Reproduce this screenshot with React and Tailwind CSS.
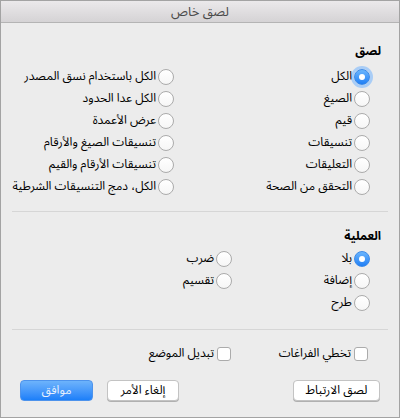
import React from 'react';

const Radio = ({ checked, focused }) => {
    if (checked) {
        return (
            <span
                className={`flex items-center justify-center w-[16px] h-[16px] rounded-full bg-gradient-to-b from-[#6ab5fd] to-[#1d7ff5] border border-[#3d8ae8] shrink-0 ${focused ? 'ring-[3px] ring-[#a9cdf6]' : ''}`}
            >
                <span className="w-[6px] h-[6px] rounded-full bg-white" />
            </span>
        );
    }
    return (
        <span className="w-[16px] h-[16px] rounded-full bg-gradient-to-b from-white to-[#f6f6f6] border border-[#ababab] shrink-0" />
    );
};

const RadioRow = ({ label, checked, focused }) => (
    <div className="flex items-center h-[22px] gap-[2px]">
        <Radio checked={checked} focused={focused} />
        <span className="whitespace-nowrap leading-[16px]">{label}</span>
    </div>
);

const CheckRow = ({ label }) => (
    <div className="flex items-center gap-[3px] h-[16px]">
        <span className="w-[14px] h-[14px] rounded-[3px] bg-white border border-[#ababab] shrink-0" />
        <span className="whitespace-nowrap">{label}</span>
    </div>
);

const Button = ({ children, primary, className }) => (
    <div
        className={`h-[21px] flex items-center justify-center rounded-[4px] ${
            primary
                ? 'bg-gradient-to-b from-[#6db3fb] to-[#1b7ff9] text-[#e6f0fd] border border-[#4d93ec]'
                : 'bg-white border border-[#c3c3c3] shadow-[0_1px_0_#b0b0b0]'
        } ${className}`}
    >
        {children}
    </div>
);

const pasteRight = ['الكل', 'الصيغ', 'قيم', 'تنسيقات', 'التعليقات', 'التحقق من الصحة'];
const pasteLeft = [
    'الكل باستخدام نسق المصدر',
    'الكل عدا الحدود',
    'عرض الأعمدة',
    'تنسيقات الصيغ والأرقام',
    'تنسيقات الأرقام والقيم',
    'الكل، دمج التنسيقات الشرطية',
];

export default function App() {
    return (
        <div
            dir="rtl"
            className="w-[400px] h-[418px] bg-[#ececec] border border-[#a3a3a3] flex flex-col text-[12px] text-black overflow-hidden"
            style={{ fontFamily: '"Noto Sans Arabic", "DejaVu Sans", sans-serif' }}
        >
            {/* شريط العنوان */}
            <div className="h-[22px] shrink-0 flex items-center justify-center bg-gradient-to-b from-[#ebe9eb] to-[#d5d3d5] border-b border-[#b4b4b4] text-[#4a4a4a] text-[13px] leading-[16px]">
                لصق خاص
            </div>

            {/* لصق */}
            <div className="pr-[18px] mt-[21px] leading-[16px] font-bold">لصق</div>
            <div className="grid grid-cols-[196px_1fr] pr-[29px] mt-[6px]">
                <div>
                    {pasteRight.map((l, i) => (
                        <RadioRow key={l} label={l} checked={i === 0} focused={i === 0} />
                    ))}
                </div>
                <div>
                    {pasteLeft.map((l) => (
                        <RadioRow key={l} label={l} />
                    ))}
                </div>
            </div>

            <div className="mx-[11px] mt-[13px] h-px bg-[#d6d6d6]" />

            {/* العملية */}
            <div className="pr-[18px] mt-[17px] leading-[16px] font-bold">العملية</div>
            <div className="grid grid-cols-[138px_1fr] pr-[29px] mt-[3px]">
                <div>
                    <RadioRow label="بلا" checked />
                    <RadioRow label="إضافة" />
                    <RadioRow label="طرح" />
                </div>
                <div>
                    <RadioRow label="ضرب" />
                    <RadioRow label="تقسيم" />
                </div>
            </div>

            <div className="mx-[11px] mt-[15px] h-px bg-[#d6d6d6]" />

            <div className="grid grid-cols-[137px_1fr] pr-[31px] mt-[16px] leading-[16px]">
                <CheckRow label="تخطي الفراغات" />
                <CheckRow label="تبديل الموضع" />
            </div>

            <div className="flex justify-between pr-[19px] pl-[19px] mt-[18px] leading-[16px]">
                <Button className="w-[87px]">لصق الارتباط</Button>
                <div className="flex gap-[14px]">
                    <Button className="w-[72px]">إلغاء الأمر</Button>
                    <Button primary className="w-[73px]">موافق</Button>
                </div>
            </div>
        </div>
    );
}
